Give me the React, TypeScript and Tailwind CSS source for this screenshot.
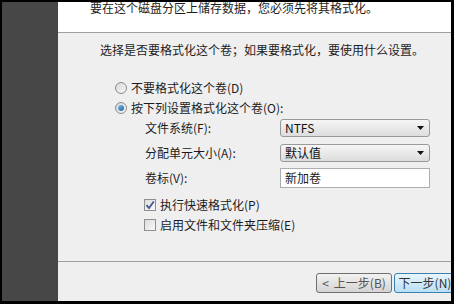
import React from "react"

const font = { fontFamily: '"Noto Sans CJK SC", "Noto Sans", sans-serif' }

function Radio({ checked }: { checked?: boolean }) {
  return (
    <span className="w-[12px] h-[12px] rounded-full border border-[#8b8b8b] bg-gradient-to-br from-[#d8d8d8] to-[#f8f8f8] flex items-center justify-center flex-shrink-0">
      {checked && <span className="w-[6px] h-[6px] rounded-full bg-gradient-to-br from-[#7fc1ea] to-[#1b5f9c]" />}
    </span>
  )
}

function Check({ checked }: { checked?: boolean }) {
  return (
    <span className="w-[12px] h-[12px] border border-[#8e8f8f] bg-gradient-to-br from-[#dcdcdc] to-[#fafafa] flex items-center justify-center flex-shrink-0">
      {checked && (
        <svg width="10" height="10" viewBox="0 0 10 10">
          <path d="M1.5 5.2 L4 8 L8.8 1.5" fill="none" stroke="#3f5a9a" strokeWidth="1.8" />
        </svg>
      )}
    </span>
  )
}

function Select({ value }: { value: string }) {
  return (
    <div className="w-[150px] h-[18px] rounded-[3px] border border-[#9a9a9a] bg-gradient-to-b from-[#f6f6f6] to-[#dddddd] flex items-center justify-between pl-[4px] pr-[5px]">
      <span className="text-[12px] leading-none text-[#111]">{value}</span>
      <svg width="7" height="4" viewBox="0 0 7 4">
        <path d="M0 0 H7 L3.5 4 Z" fill="#111" />
      </svg>
    </div>
  )
}

export default function App() {
  return (
    <div className="w-[454px] h-[304px] bg-black pt-[2px] pl-[2px] pr-[3px] pb-[3px] text-[#1c1c1c]" style={font}>
      <div className="flex h-full">
        <div className="w-[56px] bg-[#474747]" />
        <div className="flex-1 flex flex-col bg-[#f0eff0]">
          {/* header, text cut at the top like the wizard window */}
          <div className="h-[30px] bg-white overflow-hidden pl-[32px]">
            <p className="text-[12px] leading-[14px] -mt-[1px]">要在这个磁盘分区上储存数据，您必须先将其格式化。</p>
          </div>
          <div className="h-px bg-[#a0a0a0]" />
          <div className="h-[228px] flex flex-col text-[12px]">
            <div className="h-[20px] mt-[7px] pl-[42px] flex items-center">选择是否要格式化这个卷；如果要格式化，要使用什么设置。</div>
            <div className="h-[20px] mt-[18px] pl-[57px] flex items-center gap-[4px]">
              <Radio />
              <span>不要格式化这个卷(D)</span>
            </div>
            <div className="h-[20px] pl-[57px] flex items-center gap-[4px]">
              <Radio checked />
              <span>按下列设置格式化这个卷(O):</span>
            </div>
            <div className="h-[20px] pl-[87px] flex items-center">
              <span className="w-[135px]">文件系统(F):</span>
              <Select value="NTFS" />
            </div>
            <div className="h-[20px] mt-[5px] pl-[87px] flex items-center">
              <span className="w-[135px]">分配单元大小(A):</span>
              <Select value="默认值" />
            </div>
            <div className="h-[20px] mt-[5px] pl-[87px] flex items-center">
              <span className="w-[135px]">卷标(V):</span>
              <div className="w-[150px] h-[20px] border border-[#abadb3] bg-white flex items-center pl-[4px]">新加卷</div>
            </div>
            <div className="h-[20px] mt-[7px] pl-[86px] flex items-center gap-[4px]">
              <Check checked />
              <span>执行快速格式化(P)</span>
            </div>
            <div className="h-[20px] pl-[86px] flex items-center gap-[4px]">
              <Check />
              <span>启用文件和文件夹压缩(E)</span>
            </div>
          </div>
          <div className="h-px bg-[#a0a0a0]" />
          <div className="flex-1 flex items-start justify-end pt-[11px] gap-[2px] overflow-hidden">
            <div className="w-[76px] h-[20px] rounded-[3px] border border-[#707070] bg-gradient-to-b from-[#f2f2f2] to-[#d4d4d4] flex items-center justify-center gap-[5px] text-[12px] text-[#555]">
              <span>&lt;</span>
              <span>上一步(B)</span>
            </div>
            <div className="w-[62px] -mr-[5px] h-[20px] rounded-[3px] border border-[#3c7fb1] bg-gradient-to-b from-[#e8f5fc] to-[#b9e0f5] flex items-center justify-center text-[12px] text-[#333]">
              下一步(N)
            </div>
          </div>
        </div>
      </div>
    </div>
  )
}
